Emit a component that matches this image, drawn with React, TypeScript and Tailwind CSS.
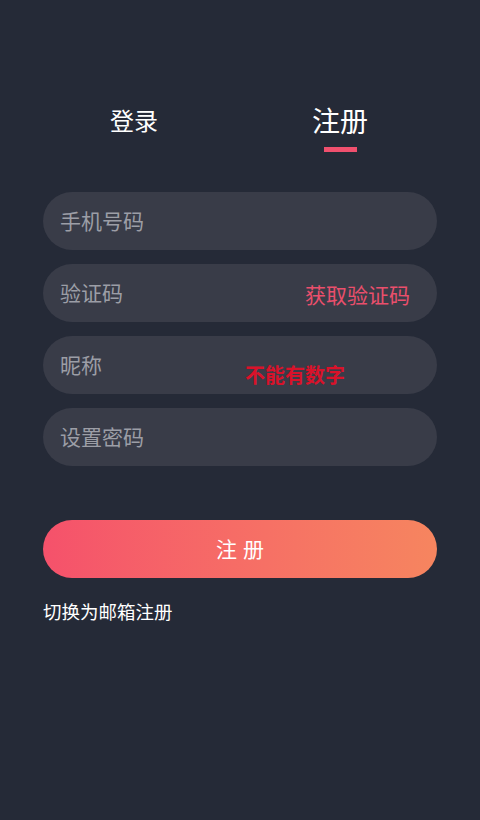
import { useState } from 'react';

const FIELDS = ['手机号码', '验证码', '昵称', '设置密码'];

export default function App() {
  const [tab, setTab] = useState<'login' | 'register'>('register');

  return (
    <div className="min-h-[820px] w-[480px] bg-[#252a37] px-[43px] font-['Noto_Sans_CJK_SC','Noto_Sans',sans-serif]">
      <div className="flex pt-[100px] h-[156px]">
        <button onClick={() => setTab('login')} className="w-[182px] flex flex-col items-center">
          <span className={`leading-[40px] text-white ${tab === 'login' ? 'text-[28px]' : 'text-[24px]'}`}>登录</span>
          {tab === 'login' && <span className="mt-[7px] block h-[5px] w-[33px] bg-[#f0506e]" />}
        </button>
        <div className="flex-1" />
        <button onClick={() => setTab('register')} className="w-[194px] flex flex-col items-center">
          <span className={`leading-[40px] text-white ${tab === 'register' ? 'text-[28px]' : 'text-[24px]'}`}>注册</span>
          {tab === 'register' && <span className="mt-[7px] block h-[5px] w-[33px] bg-[#f0506e]" />}
        </button>
      </div>

      <div className="mt-[36px] flex flex-col gap-[14px]">
        {FIELDS.map(f => (
          <div key={f} className="relative h-[58px] rounded-full bg-[#393c48] flex items-center pl-[17px] pr-[27px]">
            <input
              placeholder={f}
              className="flex-1 min-w-0 bg-transparent text-[21px] text-white placeholder:text-[#9c9ea6] outline-none"
            />
            {f === '验证码' && <button className="text-[21px] text-[#ea4f6c] mt-[3px]">获取验证码</button>}
            {f === '昵称' && (
              <span className="absolute left-[202px] top-[26px] text-[20px] leading-[28px] font-bold text-[#d9122a] font-['Liberation_Serif','Noto_Sans_CJK_SC',serif]">
                不能有数字
              </span>
            )}
          </div>
        ))}
      </div>

      <button className="mt-[54px] h-[58px] w-full rounded-full bg-gradient-to-r from-[#f5516b] to-[#f6855f] text-white text-[21px] tracking-[6px] pl-[6px]">
        注册
      </button>

      <div className="mt-[20px] text-[18.5px] text-white">切换为邮箱注册</div>
    </div>
  );
}
